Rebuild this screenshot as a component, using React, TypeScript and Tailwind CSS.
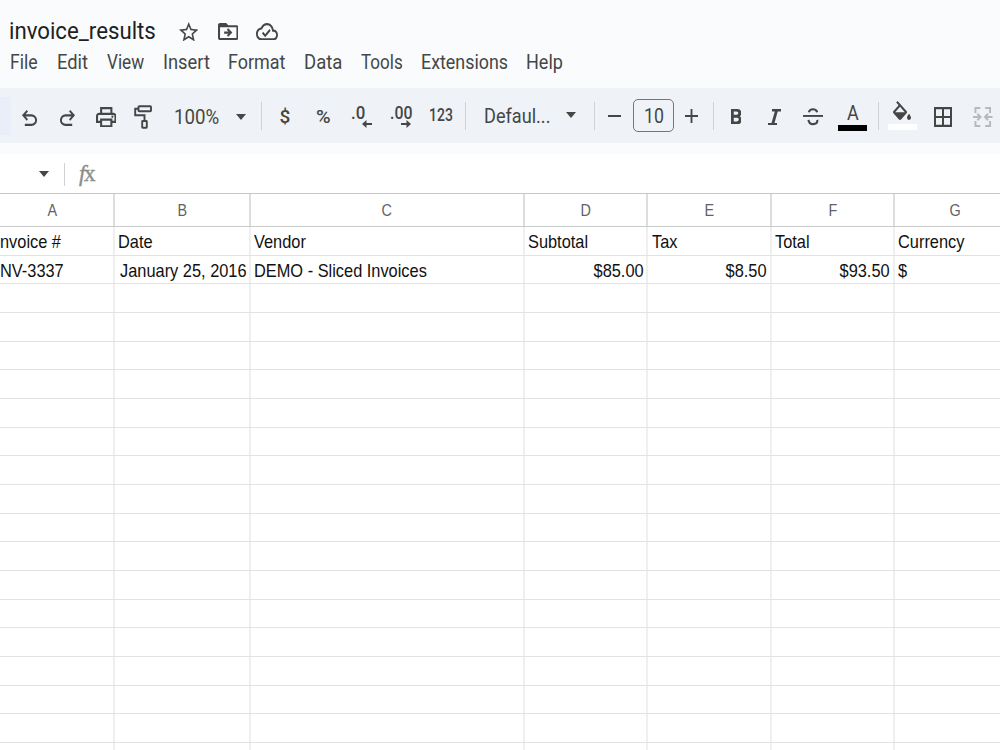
import { useLayoutEffect, useRef, useState } from "react";
import type { ReactNode } from "react";

/* Condenses its text horizontally so that it fills the width of its box. */
function Fit({ children, className }: { children: string; className: string }) {
  const box = useRef<HTMLDivElement>(null);
  const text = useRef<HTMLSpanElement>(null);
  const [scale, setScale] = useState(1);
  useLayoutEffect(() => {
    if (box.current && text.current && text.current.offsetWidth) {
      setScale(box.current.getBoundingClientRect().width / text.current.offsetWidth);
    }
  }, []);
  return (
    <div ref={box} className={`shrink-0 whitespace-nowrap leading-none ${className}`}>
      <span ref={text} className="inline-block origin-left" style={{ transform: `scaleX(${scale})` }}>
        {children}
      </span>
    </div>
  );
}

function Icon({ box, className, children }: { box: string; className: string; children: ReactNode }) {
  return (
    <svg viewBox={box} preserveAspectRatio="none" fill="currentColor" className={`shrink-0 ${className}`}>
      {children}
    </svg>
  );
}

function Separator({ className }: { className: string }) {
  return <div className={`mt-[14px] h-[28px] w-px shrink-0 bg-[#cfd2d5] ${className}`} />;
}

function Caret({ className }: { className: string }) {
  return (
    <Icon box="0 0 10 6" className={`h-[6px] w-[10px] ${className}`}>
      <path d="M0 0h10L5 6z" />
    </Icon>
  );
}

function Header() {
  return (
    <header className="h-[88px] bg-[#f9fbfd] pt-[18px] text-[#444746]">
      <div className="flex h-[33px] pl-[9px]">
        <Fit className="mt-[1px] w-[147px] text-[24.5px] text-[#1f1f1f]">invoice_results</Fit>
        <Icon box="2 2 20 19" className="ml-[22.5px] mt-[3.5px] h-[19.5px] w-[19.5px]">
          <path d="M22 9.24l-7.19-.62L12 2 9.19 8.63 2 9.24l5.46 4.73L5.82 21 12 17.27 18.18 21l-1.63-7.03L22 9.24zM12 15.4l-3.76 2.27 1-4.28-3.32-2.88 4.38-.38L12 6.1l1.71 4.04 4.38.38-3.32 2.88 1 4.28L12 15.4z" />
        </Icon>
        <Icon box="2 4 20 16" className="ml-[19.5px] mt-[4.5px] h-[17px] w-[20.5px]">
          <path fillRule="evenodd" d="M20 6h-8l-2-2H4c-1.1 0-2 .9-2 2v12c0 1.1.9 2 2 2h16c1.1 0 2-.9 2-2V8c0-1.1-.9-2-2-2zm0 12H4V8h16v10z" />
          <path d="M12 17l4-4-4-4-1.4 1.4 1.6 1.6H8v2h4.2l-1.6 1.6z" />
        </Icon>
        <Icon box="0 4 24 16" className="ml-[17.500px] mt-[4.500px] h-[17.500px] w-[22px]">
          <path d="M19.35 10.04C18.67 6.59 15.64 4 12 4 9.11 4 6.61 5.64 5.36 8.04 2.35 8.36 0 10.9 0 14c0 3.31 2.69 6 6 6h13c2.76 0 5-2.24 5-5 0-2.64-2.05-4.78-4.65-4.96zM19 18H6c-2.21 0-4-1.79-4-4 0-2.05 1.53-3.76 3.56-3.97l1.07-.11.5-.95C8.08 7.14 9.94 6 12 6c2.62 0 4.88 1.86 5.39 4.43l.3 1.5 1.53.11c1.56.1 2.78 1.41 2.78 2.96 0 1.65-1.35 3-3 3zm-9-3.82l-2.09-2.09L6.5 13.5 10 17l6.01-6.01-1.41-1.41z" />
        </Icon>
      </div>
      <nav className="flex pl-[9.5px] pt-[2px] text-[19.5px]">
        <Fit className="w-[28px]">File</Fit>
        <Fit className="ml-[19px] w-[31px]">Edit</Fit>
        <Fit className="ml-[19.5px] w-[37px]">View</Fit>
        <Fit className="ml-[18.5px] w-[47px]">Insert</Fit>
        <Fit className="ml-[18.5px] w-[57px]">Format</Fit>
        <Fit className="ml-[18.5px] w-[38px]">Data</Fit>
        <Fit className="ml-[19px] w-[42px]">Tools</Fit>
        <Fit className="ml-[18px] w-[87px]">Extensions</Fit>
        <Fit className="ml-[18.5px] w-[37px]">Help</Fit>
      </nav>
    </header>
  );
}

function Toolbar() {
  return (
    <div className="flex h-[55px] items-start overflow-hidden bg-[#eff2f7] text-[#444746]">
      <div className="mt-[9px] h-[38px] w-[11px] shrink-0 bg-[#e9eef8]" />
      <Icon box="160 -800 640 600" className="ml-[10.5px] mt-[21.5px] h-[16px] w-[15px]">
        <path d="M280-200v-80h284q63 0 109.500-40T720-420q0-60-46.500-100T564-560H312l104 104-56 56-200-200 200-200 56 56-104 104h252q97 0 167 63t70 157q0 94-70 157t-167 63H280Z" />
      </Icon>
      <Icon box="160 -800 640 600" className="ml-[23px] mt-[21.5px] h-[16px] w-[15px]">
        <path d="M396-200q-97 0-167-63t-70-157q0-94 70-157t167-63h252L544-744l56-56 200 200-200 200-56-56 104-104H396q-63 0-109.500 40T240-420q0 60 46.500 100T396-280h284v80H396Z" />
      </Icon>
      <Icon box="80 -840 800 720" className="ml-[21px] mt-[18.500px] h-[20.500px] w-[20.500px]">
        <path d="M640-640v-120H320v120h-80v-200h480v200h-80Zm80 180q17 0 28.500-11.500T760-500q0-17-11.500-28.500T720-540q-17 0-28.500 11.500T680-500q0 17 11.500 28.500T720-460Zm-80 260v-160H320v160h320Zm80 80H240v-160H80v-240q0-51 35-85.500t85-34.500h560q51 0 85.500 34.500T880-520v240H720v160Zm80-240v-160q0-17-11.500-28.500T760-560H200q-17 0-28.500 11.500T160-520v160h80v-80h480v80h80Z" />
      </Icon>
      <Icon box="0 0 18 24" className="ml-[18px] mt-[16.500px] h-[24px] w-[18px]">
        <g fill="none" stroke="currentColor" strokeWidth="1.900">
          <rect x="4.500" y="1.200" width="12.500" height="5" rx="0.700" />
          <path d="M4.500 3.700H1.200v6.500h9.300v6" />
          <rect x="8.200" y="16" width="4.600" height="6.800" rx="0.500" />
        </g>
      </Icon>
      <Fit className="ml-[22px] mt-[20px] w-[45px] text-[19.500px]">100%</Fit>
      <Caret className="ml-[17px] mt-[26px]" />
      <Separator className="ml-[15px]" />
      <Fit className="ml-[17.500px] mt-[18.500px] w-[11px] text-[19px] font-medium">$</Fit>
      <Fit className="ml-[25px] mt-[19.500px] w-[15px] text-[18.500px] font-medium">%</Fit>
      <div className="ml-[20px] mt-[15.500px] flex w-[21px] shrink-0 flex-col">
        <Fit className="h-[16px] w-[14px] text-[18px] font-medium">.0</Fit>
        <Icon box="0 0 10 8" className="ml-[11px] h-[8px] w-[10px]">
          <path d="M4.500 0 0 4l4.500 4V5.100H10V2.900H4.500z" />
        </Icon>
      </div>
      <div className="ml-[18px] mt-[15.500px] flex w-[22px] shrink-0 flex-col">
        <Fit className="h-[16px] w-[22px] text-[18px] font-medium">.00</Fit>
        <Icon box="0 0 10 8" className="ml-[11px] h-[8px] w-[10px]">
          <path d="M5.500 0 10 4 5.500 8V5.100H0V2.900h5.500z" />
        </Icon>
      </div>
      <Fit className="ml-[17px] mt-[18.500px] w-[24px] text-[17.500px] font-medium">123</Fit>
      <Separator className="ml-[12.500px]" />
      <Fit className="ml-[18px] mt-[18.500px] w-[66px] text-[19.500px]">Defaul...</Fit>
      <Caret className="ml-[16px] mt-[24px]" />
      <Separator className="ml-[18px]" />
      <div className="ml-[12.500px] mt-[27px] h-[2px] w-[13px] shrink-0 bg-[#444746]" />
      <div className="ml-[12.500px] mt-[11px] flex h-[33px] w-[41px] shrink-0 justify-center rounded-[5px] border border-[#747775] pt-[7px]">
        <Fit className="w-[20px] text-[19.500px]">10</Fit>
      </div>
      <Icon box="0 0 14 14" className="ml-[11px] mt-[21px] h-[14px] w-[13px]">
        <path d="M6 0h2v6h6v2H8v6H6V8H0V6h6z" />
      </Icon>
      <Separator className="ml-[14.500px]" />
      <Icon box="6.750 5 10.500 14" className="ml-[17px] mt-[20.500px] h-[15px] w-[10.500px]">
        <path d="M15.600 11.790c.97-.67 1.650-1.770 1.650-2.790 0-2.260-1.750-4-4-4H6.750v14h7.040c2.090 0 3.710-1.700 3.710-3.790 0-1.520-.86-2.820-2.150-3.420zM9.500 7.250h3c.83 0 1.500.67 1.500 1.500s-.67 1.500-1.500 1.500h-3v-3zm3.500 9.500H9.500v-3.500H13c.83 0 1.500.67 1.500 1.500s-.67 1.500-1.500 1.500z" />
      </Icon>
      <Icon box="0 0 13 16" className="ml-[26.500px] mt-[20.500px] h-[16.500px] w-[13px]">
        <path d="M4 0h9v2.500H9.700L6.500 13.500H9V16H0v-2.500h3.500L6.800 2.500H4z" />
      </Icon>
      <Icon box="0 0 20 18" className="ml-[22.500px] mt-[19.500px] h-[18px] w-[20px]">
        <path d="M0 7h20v1.900H0z" />
        <g fill="none" stroke="currentColor" strokeWidth="2.100">
          <path d="M14.200 4.200C13.600 2.200 12.200 1.200 10 1.200S6.300 2.200 5.800 4.200" />
          <path d="M5.500 11.800c.3 3 2 4.300 4.700 4.300 2.500 0 4.100-1.400 4.100-3.300 0-.4 0-.7-.1-1" />
        </g>
      </Icon>
      <div className="ml-[15px] mt-[16px] flex w-[29px] shrink-0 flex-col items-center">
        <Fit className="h-[20.500px] w-[12px] text-[19.500px]">A</Fit>
        <div className="h-[6px] w-full bg-black" />
      </div>
      <Separator className="ml-[10.500px]" />
      <div className="ml-[9.500px] mt-[13px] flex w-[29px] shrink-0 flex-col">
        <Icon box="3 0 18 17" className="ml-[5px] h-[19px] w-[18px]">
          <path d="M16.560 8.940 7.620 0 6.210 1.410l2.380 2.380-5.150 5.150c-.59.590-.59 1.540 0 2.120l5.500 5.500c.29.290.68.440 1.060.440s.77-.15 1.060-.44l5.500-5.500c.590-.580.590-1.530 0-2.120zM5.210 10 10 5.210 14.790 10H5.210zM19 11.500s-2 2.170-2 3.500c0 1.100.9 2 2 2s2-.9 2-2c0-1.330-2-3.500-2-3.500z" />
        </Icon>
        <div className="mt-[4px] h-[6px] w-full bg-white" />
      </div>
      <Icon box="3 3 18 18" className="ml-[17px] mt-[19px] h-[20px] w-[18px]">
        <path d="M3 3v18h18V3H3zm8 16H5v-6h6v6zm0-8H5V5h6v6zm8 8h-6v-6h6v6zm0-8h-6V5h6v6z" />
      </Icon>
      <Icon box="0 0 20 20" className="ml-[21px] mt-[19px] h-[20px] w-[19.500px] text-[#b7babd]">
        <g fill="none" stroke="currentColor" strokeWidth="2">
          <path d="M7.500 1H2.500v5M12.500 1H17.500v5M7.500 19H2.500v-5M12.500 19H17.500v-5M0 10h7M20 10h-7M4.500 6.800 7.700 10l-3.200 3.200M15.500 6.800 12.300 10l3.200 3.200" />
        </g>
      </Icon>
    </div>
  );
}

function FormulaBar() {
  return (
    <div className="flex h-[39px] items-start bg-white text-[#444746]">
      <Caret className="ml-[39px] mt-[16.500px]" />
      <div className="ml-[15px] mt-[9px] h-[23px] w-px bg-[#d0d3d6]" />
      <div className="ml-[14px] mt-[8px] flex h-[22px] font-['Liberation_Serif',serif] text-[23px] leading-none text-[#8b8e8d] [-webkit-text-stroke:0.4px_#8b8e8d]">
        <span className="italic">f</span>
        <span className="ml-[-1.500px]">x</span>
      </div>
    </div>
  );
}

type Column = { name: string; width: string; pad: string; label: string; value: string; right?: boolean };

/* The sheet is scrolled slightly to the right, so column A shows only its visible part. */
const columns: Column[] = [
  { name: "A", width: "w-[115px]", pad: "pr-[9px]", label: "nvoice #", value: "NV-3337" },
  { name: "B", width: "w-[136px]", pad: "pl-[3px] pr-[2px]", label: "Date", value: "January 25, 2016", right: true },
  { name: "C", width: "w-[274px]", pad: "pl-[3px] pr-[3px]", label: "Vendor", value: "DEMO - Sliced Invoices" },
  { name: "D", width: "w-[123px]", pad: "pl-[3px] pr-[2.500px]", label: "Subtotal", value: "$85.00", right: true },
  { name: "E", width: "w-[124px]", pad: "pl-[3.500px] pr-[3px]", label: "Tax", value: "$8.50", right: true },
  { name: "F", width: "w-[123px]", pad: "pl-[3px] pr-[3px]", label: "Total", value: "$93.50", right: true },
  { name: "G", width: "w-[123px]", pad: "pl-[3px] pr-[3px]", label: "Currency", value: "$" },
];

const rows = Array.from({ length: 19 }, (_, i) => i);

function Cell({ text, right }: { text: string; right?: boolean }) {
  return (
    <div className={`flex ${right ? "justify-end" : "justify-start"}`}>
      <span className={`shrink-0 whitespace-nowrap scale-x-[0.9] ${right ? "origin-right" : "origin-left"}`}>{text}</span>
    </div>
  );
}

function Sheet() {
  return (
    <div className="w-[1018px] border-t border-[#c4c7c5] font-['Liberation_Sans',Arial,sans-serif]">
      <div className="flex h-[33px] border-b border-[#c8cac9] text-[16px] text-[#5f6368]">
        {columns.map((c) => (
          <div key={c.name} className={`${c.width} ${c.pad} shrink-0 border-r-2 border-[#dcdedd] text-center leading-[33px]`}>
            <span className="inline-block scale-x-90">{c.name}</span>
          </div>
        ))}
      </div>
      {rows.map((r) => (
        <div key={r} className="flex h-[28.67px] border-b border-[#e1e2e2] text-[18.2px] leading-[31px] text-[#111111]">
          {columns.map((c) => (
            <div key={c.name} className={`${c.width} ${c.pad} shrink-0 border-r-2 border-[#efefef]`}>
              {r === 0 && <Cell text={c.label} />}
              {r === 1 && <Cell text={c.value} right={c.right} />}
            </div>
          ))}
        </div>
      ))}
    </div>
  );
}

export default function App() {
  return (
    <div className="h-[750px] w-[1000px] overflow-hidden bg-white font-['Roboto',sans-serif]">
      <Header />
      <Toolbar />
      <div className="h-[11px] bg-[#f9fbfd]" />
      <FormulaBar />
      <Sheet />
    </div>
  );
}
